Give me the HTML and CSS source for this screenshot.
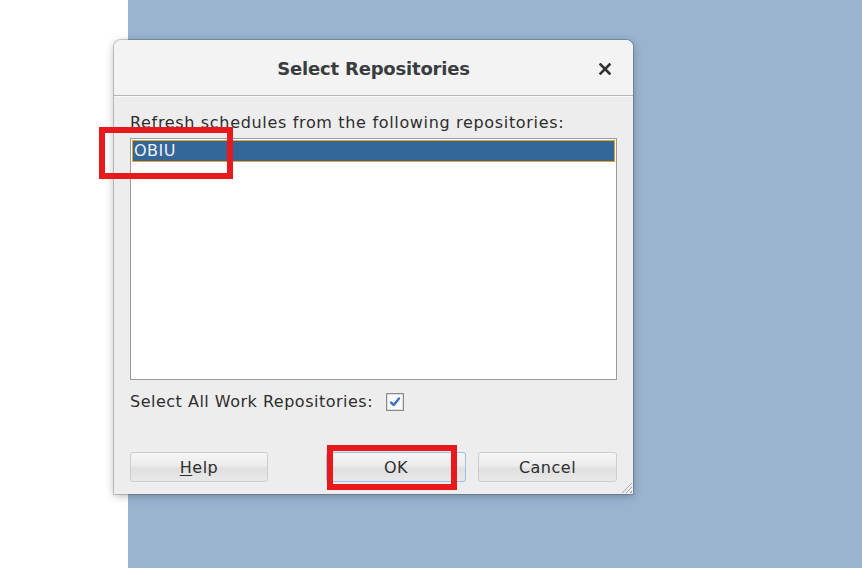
FILE: index.html
```html
<!DOCTYPE html>
<html>
<head>
<meta charset="utf-8">
<link rel="stylesheet" href="styles.css">
</head>
<body>
<div class="desk">
  <div class="left-pane"></div>
  <div class="right-pane"></div>
</div>
<div class="dialog">
  <div class="titlebar">
    <span class="title">Select Repositories</span>
    <span class="close">
      <svg width="12" height="12" viewBox="0 0 12 12"><path d="M1.5 1.5 L10.5 10.5 M10.5 1.5 L1.5 10.5" stroke="#2e3436" stroke-width="2.6" stroke-linecap="square"/></svg>
    </span>
  </div>
  <div class="content">
    <div class="label label-wide">Refresh schedules from the following repositories:</div>
    <div class="listbox">
      <div class="item selected">OBIU</div>
    </div>
    <div class="check-row">
      <span class="label">Select All Work Repositories:</span>
      <span class="checkbox">
        <svg width="14" height="14" viewBox="0 0 14 14"><path d="M3 7.5 L5.8 10 L11 3.5" fill="none" stroke="#3d74c4" stroke-width="2.4" stroke-linecap="round" stroke-linejoin="round"/></svg>
      </span>
    </div>
    <div class="buttons">
      <button class="btn btn-help"><u>H</u>elp</button>
      <button class="btn btn-ok">OK</button>
      <button class="btn btn-cancel">Cancel</button>
    </div>
  </div>
  <div class="grip"></div>
</div>
<div class="mark mark-list"></div>
<div class="mark mark-ok"></div>
</body>
</html>
```
FILE: styles.css
```css
html, body {
  margin: 0;
  padding: 0;
  width: 862px;
  height: 568px;
  overflow: hidden;
  font-family: "DejaVu Sans", sans-serif;
}
.desk {
  display: flex;
  width: 862px;
  height: 568px;
}
.left-pane {
  width: 128px;
  background: #ffffff;
}
.right-pane {
  flex: 1;
  background: #9ab4d0;
}
.dialog {
  position: absolute;
  left: 114px;
  top: 40px;
  width: 519px;
  height: 454px;
  background: #ededed;
  border-radius: 7px 7px 0 0;
  box-shadow: 0 0 0 1px rgba(0,0,0,0.18), 0 2px 10px rgba(0,0,0,0.28);
  display: flex;
  flex-direction: column;
  color: #2e2e2e;
}
.titlebar {
  height: 55px;
  flex: none;
  background: #f3f3f3;
  border-radius: 7px 7px 0 0;
  border-bottom: 1px solid #b4b4b4;
  box-shadow: 0 1px 0 #f8f8f8;
  display: flex;
  align-items: center;
  justify-content: center;
  position: relative;
}
.title {
  font-size: 18px;
  font-weight: bold;
  color: #3a3d3f;
  letter-spacing: -0.2px;
  margin-top: 2px;
}
.close {
  position: absolute;
  right: 22px;
  top: 23px;
  width: 12px;
  height: 12px;
  display: flex;
}
.content {
  padding: 17px 16px 0 16px;
  display: flex;
  flex-direction: column;
}
.label {
  font-size: 16px;
  letter-spacing: 0.5px;
  line-height: 19px;
  color: #2e2e2e;
}
.label-wide {
  letter-spacing: 0.67px;
}
.listbox {
  box-sizing: border-box;
  margin-top: 6px;
  width: 487px;
  height: 242px;
  background: #ffffff;
  border: 1px solid #9a9a9a;
  padding: 1px;
}
.item {
  box-sizing: border-box;
  height: 22px;
  font-size: 16px;
  line-height: 20px;
  padding-left: 1px;
  letter-spacing: 0.5px;
}
.item.selected {
  background: #336699;
  color: #f0f0f0;
  border: 1px solid #f0a020;
}
.check-row {
  margin-top: 12px;
  display: flex;
  align-items: center;
  gap: 13px;
}
.checkbox {
  box-sizing: border-box;
  width: 18px;
  height: 18px;
  border: 1px solid #8a8a8a;
  box-shadow: inset 0 0 0 1px #dcdcdc;
  background: #fafafa;
  display: flex;
  align-items: center;
  justify-content: center;
}
.buttons {
  margin-top: 41px;
  display: flex;
  align-items: center;
}
.btn {
  font-family: "DejaVu Sans", sans-serif;
  font-size: 16px;
  letter-spacing: 0.5px;
  color: #2e2e2e;
  height: 30px;
  border: 1px solid #cdcdcd;
  border-radius: 3px;
  background: linear-gradient(#f6f6f6, #ececec 45%, #e0e0e0 55%, #e8e8e8);
  padding: 0;
  margin: 0;
}
.btn u {
  text-decoration-thickness: 1px;
  text-underline-offset: 2px;
}
.btn-help {
  width: 138px;
}
.btn-ok {
  width: 140px;
  margin-left: 58px;
  border-color: #9cc0e8;
}
.btn-cancel {
  width: 139px;
  margin-left: 12px;
}
.grip {
  position: absolute;
  right: 1px;
  bottom: 1px;
  width: 11px;
  height: 11px;
  background: repeating-linear-gradient(135deg, transparent 0 2px, #a8a8a8 2px 3px);
  clip-path: polygon(100% 0, 100% 100%, 0 100%);
}
.mark {
  position: absolute;
  border: 6px solid #e8191c;
  box-sizing: border-box;
}
.mark-list {
  left: 99px;
  top: 127px;
  width: 134px;
  height: 52px;
}
.mark-ok {
  left: 327px;
  top: 445px;
  width: 130px;
  height: 45px;
}
```
